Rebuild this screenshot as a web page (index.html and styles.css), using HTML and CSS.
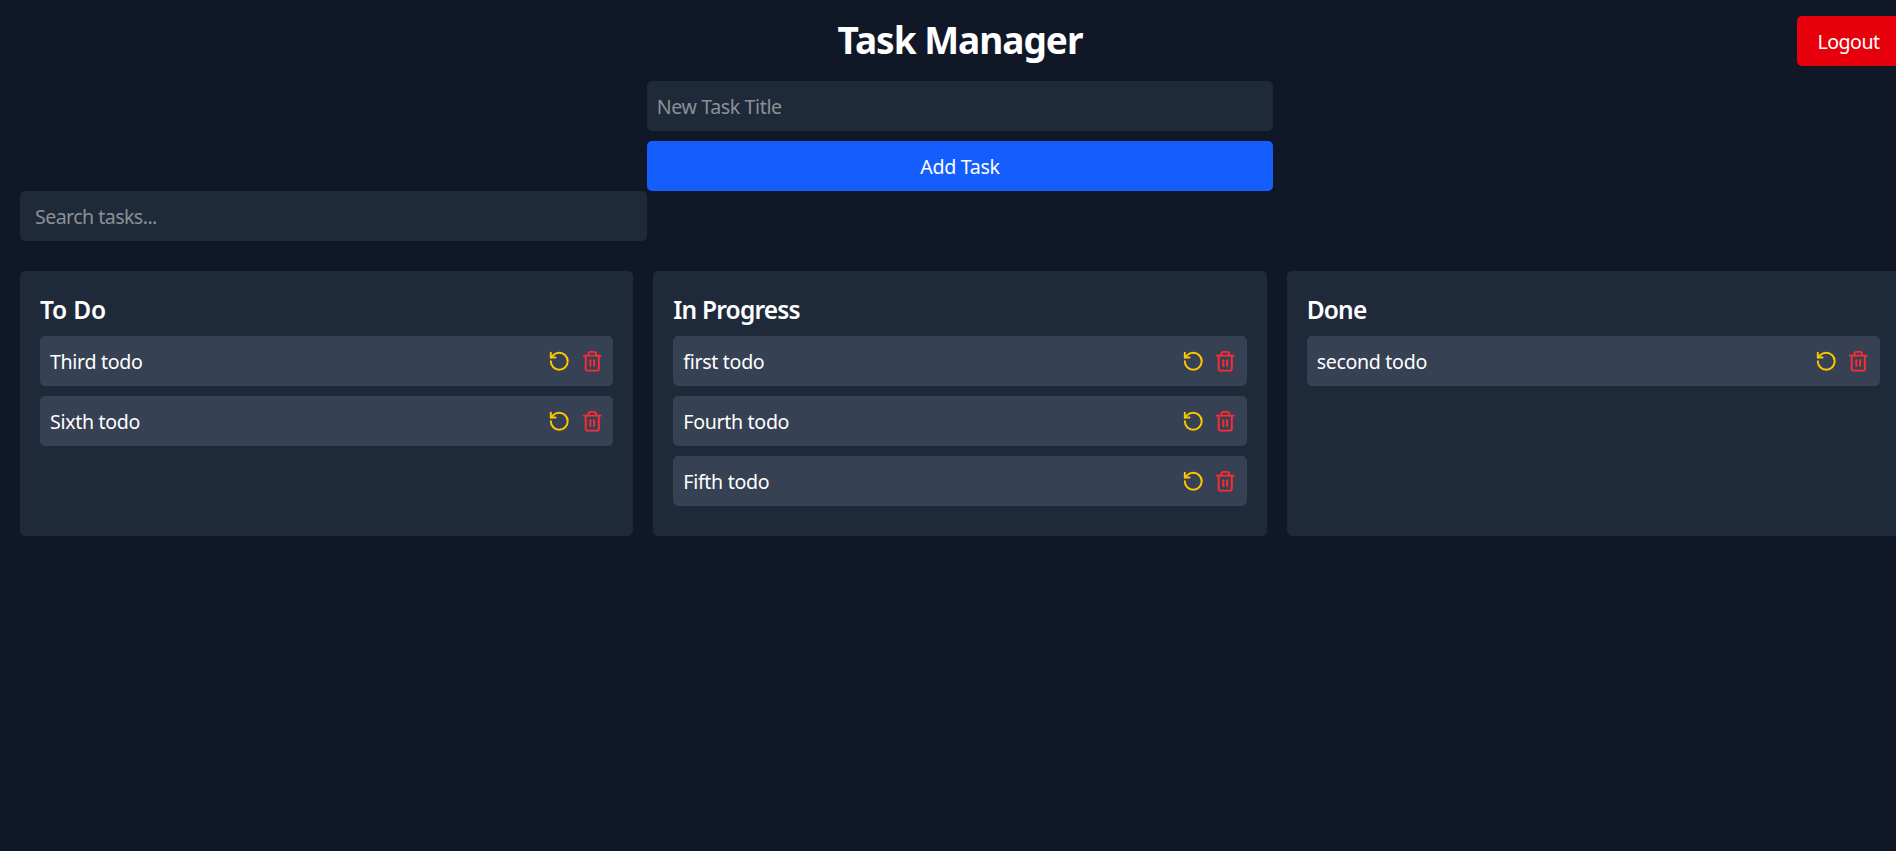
FILE: index.html
```html
<!DOCTYPE html>
<html lang="en">
<head>
<meta charset="utf-8">
<title>Task Manager</title>
<link rel="stylesheet" href="styles.css">
</head>
<body>
<svg class="sprite" aria-hidden="true">
  <symbol id="reset" viewBox="0 0 24 24"><path d="M3 12a9 9 0 1 0 9-9 9.75 9.75 0 0 0-6.74 2.74L3 8"/><path d="M3 3v5h5"/></symbol>
  <symbol id="trash" viewBox="0 0 24 24"><path d="M3 6h18"/><path d="M19 6v14c0 1-1 2-2 2H7c-1 0-2-1-2-2V6"/><path d="M8 6V4c0-1 1-2 2-2h4c1 0 2 1 2 2v2"/><path d="M10 11v6"/><path d="M14 11v6"/></symbol>
</svg>
<main class="page">
  <header class="header">
    <h1 class="title">Task Manager</h1>
    <button class="logout">Logout</button>
  </header>
  <form class="form">
    <input class="field" placeholder="New Task Title">
    <button class="add" type="button">Add Task</button>
  </form>
  <input class="field search" placeholder="Search tasks...">
  <div class="board">
    <section class="column">
      <h2 class="heading heading-todo">To Do</h2>
      <div class="task"><span class="name">Third todo</span><span class="actions"><svg class="icon reset"><use href="#reset"/></svg><svg class="icon trash"><use href="#trash"/></svg></span></div>
      <div class="task"><span class="name">Sixth todo</span><span class="actions"><svg class="icon reset"><use href="#reset"/></svg><svg class="icon trash"><use href="#trash"/></svg></span></div>
    </section>
    <section class="column">
      <h2 class="heading">In Progress</h2>
      <div class="task"><span class="name">first todo</span><span class="actions"><svg class="icon reset"><use href="#reset"/></svg><svg class="icon trash"><use href="#trash"/></svg></span></div>
      <div class="task"><span class="name">Fourth todo</span><span class="actions"><svg class="icon reset"><use href="#reset"/></svg><svg class="icon trash"><use href="#trash"/></svg></span></div>
      <div class="task"><span class="name">Fifth todo</span><span class="actions"><svg class="icon reset"><use href="#reset"/></svg><svg class="icon trash"><use href="#trash"/></svg></span></div>
    </section>
    <section class="column">
      <h2 class="heading">Done</h2>
      <div class="task"><span class="name">second todo</span><span class="actions"><svg class="icon reset"><use href="#reset"/></svg><svg class="icon trash"><use href="#trash"/></svg></span></div>
    </section>
  </div>
</main>
</body>
</html>
```
FILE: styles.css
```css
* { box-sizing: border-box; margin: 0; padding: 0; }
body {
  height: 851px;
  overflow: hidden;
  background: #101828;
  color: #fff;
  font: 19.6px/30px "Noto Sans", "Open Sans", sans-serif;
  letter-spacing: -0.32px;
}
.sprite { display: none; }
.page { width: 1920px; padding: 16px 20px 0; }
.header {
  display: grid;
  grid-template-columns: 1fr auto 1fr;
  align-items: center;
  height: 50px;
  margin-bottom: 15px;
}
.title { grid-column: 2; padding-bottom: 2px; font-size: 37px; line-height: 48px; font-weight: 700; letter-spacing: -1px; }
button, input { border: 0; border-radius: 5px; font: inherit; color: inherit; letter-spacing: inherit; }
.logout { justify-self: end; width: 103px; height: 50px; padding: 2px 0 0; background: #e7000b; letter-spacing: -0.5px; }
.form { display: flex; flex-direction: column; gap: 10px; width: 626.67px; margin: 0 auto; }
.field { display: block; height: 50px; padding: 0 10px; background: #1e2939; letter-spacing: -0.38px; }
.field::placeholder { color: #8d9096; opacity: 1; }
.add { height: 50px; padding-top: 2px; background: #155dfc; }
.search { width: 626.67px; padding: 0 15px; margin-bottom: 30px; letter-spacing: -0.56px; }
.board { display: grid; grid-template-columns: repeat(3, 1fr); gap: 20px; }
.column { padding: 20px; border-radius: 5px; background: #1e2939; }
.heading { padding-top: 1px; font-size: 24.5px; line-height: 35px; font-weight: 600; letter-spacing: -0.8px; margin-bottom: 9px; }
.heading-todo { letter-spacing: -0.15px; }
.task {
  display: flex;
  align-items: center;
  justify-content: space-between;
  height: 50px;
  padding: 0 10px;
  margin-bottom: 10px;
  border-radius: 5px;
  background: #364153;
}
.name { padding-top: 2px; }
.actions { display: flex; gap: 10px; }
.icon { width: 22.5px; height: 22.5px; fill: none; stroke-width: 2.1; stroke-linecap: round; stroke-linejoin: round; }
.reset { stroke: #fdc700; }
.trash { stroke: #fb2c36; }
```
